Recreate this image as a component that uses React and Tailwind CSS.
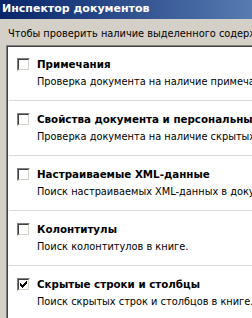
import React from "react"

const items = [
  { title: "Примечания", desc: "Проверка документа на наличие примечаний.", checked: false },
  { title: "Свойства документа и персональные данные", desc: "Проверка документа на наличие скрытых метаданных или персональных сведений.", checked: false },
  { title: "Настраиваемые XML-данные", desc: "Поиск настраиваемых XML-данных в документе.", checked: false },
  { title: "Колонтитулы", desc: "Поиск колонтитулов в книге.", checked: false },
  { title: "Скрытые строки и столбцы", desc: "Поиск скрытых строк и столбцов в книге.", checked: true },
]

function Checkbox({ checked }) {
  return (
    <div className="w-[13px] h-[13px] shrink-0 border-t border-l border-t-[#808080] border-l-[#808080] border-b border-r border-b-white border-r-white">
      <div className="w-full h-full bg-white border-t border-l border-t-[#404040] border-l-[#404040] border-b border-r border-b-[#d4d0c8] border-r-[#d4d0c8] flex items-center justify-center">
        {checked && (
          <svg width="7" height="7" viewBox="0 0 7 7">
            <path d="M0 2h1v1h1v1h1V3h1V2h1V1h1V0h1v3H6v1H5v1H4v1H3v1H2V6H1V5H0z" fill="#000" />
          </svg>
        )}
      </div>
    </div>
  )
}

export default function App() {
  return (
    <div className="w-[252px] h-[318px] overflow-hidden bg-[#d4d0c8] text-[9.8px] text-black" style={{ fontFamily: '"DejaVu Sans", Verdana, sans-serif' }}>
      {/* Title bar */}
      <div className="h-[19px] w-[470px] flex items-center pl-[2px] bg-gradient-to-r from-[#0a246a] to-[#a6caf0]">
        <span className="text-white font-bold text-[11px] whitespace-nowrap">Инспектор документов</span>
      </div>

      <div className="pl-[8px] pt-[8px] h-[18px] whitespace-nowrap leading-[14px]">
        Чтобы проверить наличие выделенного содержимого, нажмите кнопку «Проверить».
      </div>

      {/* Options panel */}
      <div className="ml-[6px] mt-[8px] w-[400px] border-t border-l border-[#808080]">
        <div className="border-t border-l border-[#404040] bg-white pt-[10px]">
          {items.map((item, i) => (
            <div key={i}>
              {i > 0 && <div className="ml-px h-px bg-[#dadada] mb-[11px]" />}
              <div className="pb-[11px]">
                <div className="flex items-center h-[14px] pl-[9px]">
                  <Checkbox checked={item.checked} />
                  <span className="ml-[7px] font-bold text-[10.3px] whitespace-nowrap leading-[14px]">{item.title}</span>
                </div>
                <div className="pl-[29px] mt-[4px] h-[14px] leading-[14px] whitespace-nowrap">{item.desc}</div>
              </div>
            </div>
          ))}
        </div>
      </div>
    </div>
  )
}
